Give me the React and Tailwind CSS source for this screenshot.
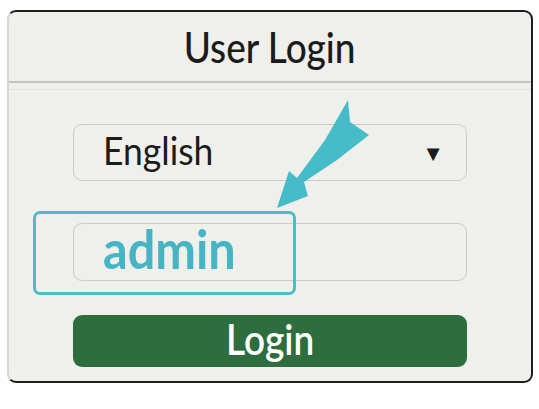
import React from "react";

const Arrow = () => (
  <svg className="absolute left-0 top-0 pointer-events-none" width="539" height="409" viewBox="0 0 539 409">
    <polygon
      points="348,100 350,122 369,135 337,160 304,182 308,196 277,208 289,171 297,178 325,140"
      fill="#46bcc8"
    />
  </svg>
);

const App = () => {
  return (
    <div className="relative w-[539px] h-[409px] bg-white" style={{ fontFamily: "Lato, 'Open Sans', sans-serif" }}>
      <div className="absolute left-[7px] top-[10px] w-[526px] h-[373px] bg-[#efefec] rounded-[9px] border-l-2 border-l-[#d6d6d3] border-y-2 border-y-[#1e1e1e] border-r-2 border-r-[#1e1e1e] overflow-hidden">
        <div className="h-[69px] flex items-center justify-center">
          <span className="inline-block scale-x-[0.88] text-[42px] font-medium text-[#1b1b1b] leading-none">User Login</span>
        </div>
        <div className="h-[2px] bg-[#c4c4c0]" />
        <div className="h-[6px]" />
        <div className="h-[1px] bg-[#e2e2de]" />
        <div className="flex flex-col items-center pt-[34px] pr-[64px] pl-[64px]">
          <div className="w-full h-[57px] rounded-[9px] border border-[#cacac6] flex items-center justify-between pl-[29px] pr-[22px]">
            <span className="inline-block origin-left scale-x-[0.91] text-[39px] text-[#1b1b1b] leading-none -mt-[4px]">English</span>
            <span className="text-[22px] text-[#1b1b1b] leading-none">▼</span>
          </div>
          <div className="mt-[42px] w-full h-[58px] rounded-[9px] border border-[#cacac6] flex items-center pl-[29px]">
            <span className="inline-block origin-left scale-x-[0.9] text-[54px] font-bold text-[#45b5c4] leading-none -mt-[6px]">admin</span>
          </div>
          <div className="mt-[34px] w-full h-[52px] rounded-[9px] bg-[#2e6e3e] flex items-center justify-center">
            <span className="inline-block scale-x-[0.88] text-[42px] font-semibold text-white leading-none -mt-[4px]">Login</span>
          </div>
        </div>
      </div>
      <div className="absolute left-[33px] top-[211px] w-[263px] h-[84px] border-[3px] border-[#4fbcc5] rounded-[7px]" />
      <Arrow />
    </div>
  );
};

export default App;
